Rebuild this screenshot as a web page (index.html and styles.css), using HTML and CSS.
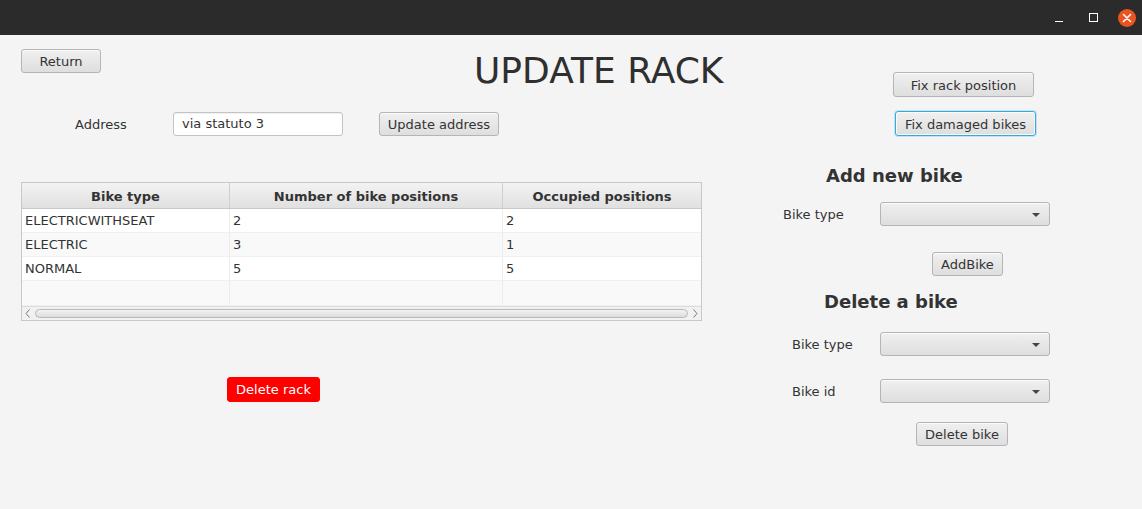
FILE: index.html
```html
<!DOCTYPE html>
<html>
<head>
<meta charset="utf-8">
<link rel="stylesheet" href="styles.css">
</head>
<body>
<div class="titlebar">
  <div class="wctl min"><span class="minline"></span></div>
  <div class="wctl max"><span class="maxbox"></span></div>
  <div class="wctl close">
    <svg width="18" height="18" viewBox="0 0 18 18"><circle cx="9" cy="9" r="9" fill="#e95420"/><path d="M5.5 5.5 L12.5 12.5 M12.5 5.5 L5.5 12.5" stroke="#fff" stroke-width="1.6" stroke-linecap="round"/></svg>
  </div>
</div>
<div class="content">
  <div class="left">
    <div class="toprow">
      <button class="btn return">Return</button>
      <h1 class="title">UPDATE RACK</h1>
    </div>
    <div class="addrrow">
      <span class="lbl addr-lbl">Address</span>
      <div class="field">via statuto 3</div>
      <button class="btn upd">Update address</button>
    </div>
    <div class="table">
      <div class="thead">
        <div class="th c1">Bike type</div>
        <div class="th c2">Number of bike positions</div>
        <div class="th c3">Occupied positions</div>
      </div>
      <div class="tr">
        <div class="td c1">ELECTRICWITHSEAT</div><div class="td c2">2</div><div class="td c3">2</div>
      </div>
      <div class="tr odd">
        <div class="td c1">ELECTRIC</div><div class="td c2">3</div><div class="td c3">1</div>
      </div>
      <div class="tr">
        <div class="td c1">NORMAL</div><div class="td c2">5</div><div class="td c3">5</div>
      </div>
      <div class="tr odd last">
        <div class="td c1"></div><div class="td c2"></div><div class="td c3"></div>
      </div>
      <div class="hscroll">
        <svg class="arr" width="10" height="15" viewBox="0 0 10 15"><path d="M6.5 3.5 L3 7.5 L6.5 11.5" fill="none" stroke="#777" stroke-width="1"/></svg>
        <div class="thumb"></div>
        <svg class="arr" width="10" height="15" viewBox="0 0 10 15"><path d="M3.5 3.5 L7 7.5 L3.5 11.5" fill="none" stroke="#777" stroke-width="1"/></svg>
      </div>
    </div>
    <button class="btn danger">Delete rack</button>
  </div>
  <div class="right">
    <button class="btn fix1">Fix rack position</button>
    <button class="btn fix2 focused">Fix damaged bikes</button>
    <h2 class="h2 add-h">Add new bike</h2>
    <div class="formrow r1">
      <span class="lbl flbl1">Bike type</span>
      <div class="combo"><span class="caret"></span></div>
    </div>
    <button class="btn addbike">AddBike</button>
    <h2 class="h2 del-h">Delete a bike</h2>
    <div class="formrow r2">
      <span class="lbl flbl2">Bike type</span>
      <div class="combo"><span class="caret"></span></div>
    </div>
    <div class="formrow r3">
      <span class="lbl flbl2">Bike id</span>
      <div class="combo"><span class="caret"></span></div>
    </div>
    <button class="btn delbike">Delete bike</button>
  </div>
</div>
</body>
</html>
```
FILE: styles.css
```css
* { box-sizing: border-box; }
html, body { margin: 0; padding: 0; }
body {
  width: 1142px;
  height: 509px;
  background: #f4f4f4;
  font-family: "DejaVu Sans", "Liberation Sans", sans-serif;
  font-size: 13px;
  color: #333333;
  overflow: hidden;
}
.titlebar {
  height: 35px;
  background: #2b2b2b;
  display: flex;
  justify-content: flex-end;
  align-items: center;
  padding-right: 1px;
}
.wctl {
  width: 34px;
  height: 35px;
  display: flex;
  align-items: center;
  justify-content: center;
}
.wctl.close { width: 28px; }
.minline {
  display: block;
  width: 8px;
  height: 1px;
  background: #fff;
  margin-top: 7px;
  margin-right: 6px;
}
.maxbox {
  display: block;
  width: 9px;
  height: 9px;
  border: 1.5px solid #fff;
  margin-right: 6px;
}
.content {
  display: flex;
  height: 474px;
}
.left {
  width: 761px;
  padding-left: 21px;
  display: flex;
  flex-direction: column;
  align-items: flex-start;
}
.right {
  flex: 1;
  display: flex;
  flex-direction: column;
  align-items: flex-start;
}
.btn {
  font-family: inherit;
  font-size: 13px;
  color: #333;
  height: 24px;
  padding: 1px 4px 0;
  border: 1px solid #b5b5b5;
  border-radius: 3px;
  background: linear-gradient(#f0f0f0, #dedede);
  box-shadow: inset 0 1px 0 rgba(255,255,255,0.7);
  line-height: 21px;
  margin: 0;
  white-space: nowrap;
  cursor: default;
}
.btn.focused {
  border: 1px solid #3aa8d8;
  box-shadow: 0 0 0 1px #bde3f4, inset 0 0 0 1px #fbfbfb;
}
.toprow {
  display: flex;
  align-items: flex-start;
  margin-top: 14px;
  height: 45px;
}
.return { width: 80px; }
.title {
  margin: 1px 0 0 373px;
  font-size: 36px;
  font-weight: normal;
  line-height: 42px;
  color: #2f2f2f;
  white-space: nowrap;
}
.addrrow {
  display: flex;
  align-items: center;
  margin-top: 18px;
  height: 24px;
}
.lbl { white-space: nowrap; }
.addr-lbl { margin-left: 54px; width: 98px; }
.field {
  width: 170px;
  height: 24px;
  background: #fff;
  border: 1px solid #c3c3c3;
  border-radius: 3px;
  padding: 0 8px;
  line-height: 22px;
  box-shadow: inset 0 1px 1px rgba(0,0,0,0.06);
}
.upd { margin-left: 36px; width: 120px; }
.table {
  margin-top: 46px;
  width: 681px;
  border: 1px solid #c8c8c8;
  background: #f4f4f4;
}
.thead {
  display: flex;
  height: 26px;
  background: linear-gradient(#f3f3f3, #e0e0e0);
  border-bottom: 1px solid #c8c8c8;
}
.th {
  font-weight: bold;
  text-align: center;
  line-height: 27px;
  border-right: 1px solid #cfcfcf;
  white-space: nowrap;
}
.c1 { width: 208px; }
.c2 { width: 273px; }
.c3 { flex: 1; border-right: none; }
.tr {
  display: flex;
  height: 24px;
  background: #ffffff;
  border-bottom: 1px solid #f0f0f0;
}
.tr.odd { background: #f9f9f9; }
.tr.last { height: 25px; }
.td {
  padding-left: 3px;
  line-height: 23px;
  border-right: 1px solid #ececec;
  white-space: nowrap;
}
.td.c3 { border-right: none; }
.hscroll {
  height: 14px;
  display: flex;
  align-items: center;
  background: #f1f1f1;
  border-top: 1px solid #dcdcdc;
}
.arr { flex: none; width: 12px; }
.thumb {
  flex: 1;
  height: 9px;
  margin: 0 1px;
  border: 1px solid #b9b9b9;
  border-radius: 5px;
  background: linear-gradient(#f2f2f2, #dcdcdc);
}
.danger {
  margin-top: 56px;
  margin-left: 206px;
  width: 93px;
  height: 25px;
  padding-top: 0;
  background: #ff0000;
  color: #ffffff;
  border: 1px solid #ff0000;
  box-shadow: none;
}
.fix1 { margin-top: 37px; margin-left: 132px; width: 141px; height: 25px; }
.fix2 { margin-top: 14px; margin-left: 134px; width: 141px; height: 25px; }
.h2 {
  font-size: 18px;
  font-weight: bold;
  line-height: 22px;
  margin: 0;
  color: #333;
  white-space: nowrap;
}
.add-h { margin-top: 29px; margin-left: 65px; }
.formrow {
  display: flex;
  align-items: center;
  height: 24px;
}
.r1 { margin-top: 15px; }
.flbl1 { margin-left: 22px; width: 97px; }
.flbl2 { margin-left: 31px; width: 88px; }
.combo {
  width: 170px;
  height: 24px;
  border: 1px solid #b5b5b5;
  border-radius: 3px;
  background: linear-gradient(#f0f0f0, #dedede);
  box-shadow: inset 0 1px 0 rgba(255,255,255,0.7);
  position: relative;
}
.caret {
  position: absolute;
  right: 9px;
  top: 10px;
  width: 0;
  height: 0;
  border-left: 4px solid transparent;
  border-right: 4px solid transparent;
  border-top: 4px solid #444;
}
.addbike { margin-top: 26px; margin-left: 171px; width: 71px; }
.del-h { margin-top: 15px; margin-left: 63px; }
.r2 { margin-top: 19px; }
.r3 { margin-top: 23px; }
.delbike { margin-top: 19px; margin-left: 155px; width: 92px; }
```
